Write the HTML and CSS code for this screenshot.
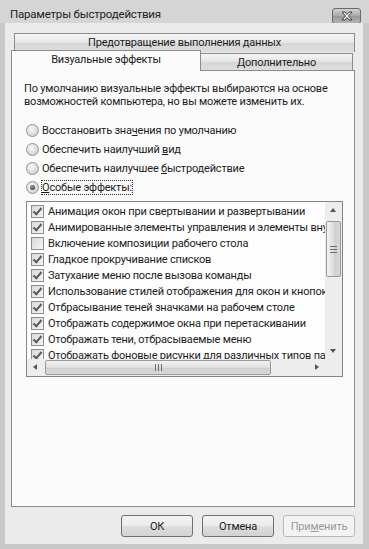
FILE: index.html
```html
<!DOCTYPE html>
<html>
<head>
    <title>Параметры быстродействия</title>
    <meta name="viewport" content="width=device-width, initial-scale=1.0">
    <link rel="stylesheet" href="styles.css">
</head>
<body>
    <div class="window">
        <div class="titlebar">
            <span class="title">Параметры быстродействия</span>
            <div class="close">
                <svg width="14" height="10" viewBox="0 0 14 10">
                    <path d="M2 1 L5 1 L7 3.5 L9 1 L12 1 L8.5 5 L12 9 L9 9 L7 6.5 L5 9 L2 9 L5.5 5 Z" fill="#fafafa" stroke="#3c3c3c" stroke-width="1"/>
                </svg>
            </div>
        </div>

        <div class="client">
            <!-- вкладки -->
            <div class="tabs">
                <div class="tab-row back">
                    <div class="tab wide">Предотвращение выполнения данных</div>
                </div>
                <div class="tab-row front">
                    <div class="tab active">Визуальные эффекты</div>
                    <div class="tab other">Дополнительно</div>
                </div>
            </div>

            <div class="panel">
                <p class="intro">По умолчанию визуальные эффекты выбираются на основе возможностей компьютера, но вы можете изменить их.</p>

                <div class="radios">
                    <div class="radio-row"><span class="radio"></span><span>Восстановить зна<u>ч</u>ения по умолчанию</span></div>
                    <div class="radio-row"><span class="radio"></span><span>Обеспечить наилучший <u>в</u>ид</span></div>
                    <div class="radio-row"><span class="radio"></span><span>Обеспечить наилучшее <u>б</u>ыстродействие</span></div>
                    <div class="radio-row"><span class="radio on"></span><span class="focus"><u>О</u>собые эффекты:</span></div>
                </div>

                <div class="listbox">
                    <div class="list-body">
                        <div class="list-items">
                            <div class="item"><span class="cb on"></span>Анимация окон при свертывании и развертывании</div>
                            <div class="item"><span class="cb on"></span>Анимированные элементы управления и элементы внутри окна</div>
                            <div class="item"><span class="cb"></span>Включение композиции рабочего стола</div>
                            <div class="item"><span class="cb on"></span>Гладкое прокручивание списков</div>
                            <div class="item"><span class="cb on"></span>Затухание меню после вызова команды</div>
                            <div class="item"><span class="cb on"></span>Использование стилей отображения для окон и кнопок</div>
                            <div class="item"><span class="cb on"></span>Отбрасывание теней значками на рабочем столе</div>
                            <div class="item"><span class="cb on"></span>Отображать содержимое окна при перетаскивании</div>
                            <div class="item"><span class="cb on"></span>Отображать тени, отбрасываемые меню</div>
                            <div class="item"><span class="cb on"></span>Отображать фоновые рисунки для различных типов папок</div>
                        </div>
                        <div class="vscroll">
                            <div class="arrow up"></div>
                            <div class="vtrack">
                                <div class="vthumb"><span class="grip-h"></span></div>
                            </div>
                            <div class="arrow down"></div>
                        </div>
                    </div>
                    <div class="hscroll-row">
                        <div class="hscroll">
                            <div class="arrow left"></div>
                            <div class="htrack">
                                <div class="hthumb"><span class="grip-v"></span></div>
                            </div>
                            <div class="arrow right"></div>
                        </div>
                        <div class="corner"></div>
                    </div>
                </div>
            </div>

            <div class="buttons">
                <button class="btn">ОК</button>
                <button class="btn">Отмена</button>
                <button class="btn disabled">При<u>м</u>енить</button>
            </div>
        </div>
    </div>
</body>
</html>
```

FILE: styles.css
```css
body {
    margin: 0;
    padding: 0;
    font-family: Roboto, "Noto Sans", sans-serif;
    font-size: 11px;
    letter-spacing: -0.2px;
    color: #1c1c1c;
}

.window {
    width: 369px;
    height: 549px;
    background: #c8c8c8;
    display: flex;
    flex-direction: column;
}

.titlebar {
    height: 23px;
    background: #d5d5d5;
    display: flex;
    align-items: flex-start;
    justify-content: space-between;
}

.title {
    padding: 7px 0 0 10px;
    font-size: 11.5px;
    color: #222;
}

.close {
    width: 27px;
    height: 14px;
    margin: 8px 8px 0 0;
    border: 1px solid #6a6a6a;
    border-radius: 3px;
    background: linear-gradient(#d2d2d2, #a9a9a9 50%, #989898 51%, #b4b4b4);
    display: flex;
    align-items: center;
    justify-content: center;
}

.client {
    flex: 1;
    margin: 0 6px 5px 5px;
    background: #ebebeb;
    display: flex;
    flex-direction: column;
}

/* вкладки */
.tabs {
    padding: 10px 0 0 6px;
}

.tab-row {
    display: flex;
    align-items: flex-start;
}

.tab {
    box-sizing: border-box;
    border: 1px solid #8c8c8c;
    border-bottom: none;
    background: linear-gradient(#f6f6f6, #e4e4e4 50%, #d6d6d6 51%, #dedede);
    text-align: center;
    line-height: 17px;
}

.tab.wide {
    margin-left: 3px;
    width: 341px;
    height: 19px;
}

.tab-row.front {
    margin-top: -2px;
}

.tab.active {
    position: relative;
    z-index: 1;
    width: 190px;
    height: 21px;
    background: #fbfbfb;
    line-height: 17px;
}

.tab.other {
    width: 152px;
    height: 17px;
    margin-top: 3px;
    border-left: none;
    line-height: 18px;
}

.panel {
    box-sizing: border-box;
    margin: -1px 0 0 6px;
    width: 344px;
    height: 437px;
    border: 1px solid #8c8c8c;
    background: #fbfbfb;
    padding: 11px 0 0 12px;
}

.intro {
    margin: 0;
    line-height: 13px;
    width: 320px;
}

.radios {
    margin-top: 13px;
}

.radio-row {
    height: 19px;
    display: flex;
    align-items: center;
    margin-left: 2px;
}

.radio {
    box-sizing: border-box;
    width: 13px;
    height: 13px;
    border-radius: 50%;
    border: 1px solid #939393;
    background: radial-gradient(circle at 40% 35%, #fafafa, #d4d4d4 70%, #c2c2c2);
    margin-right: 3px;
    display: flex;
    align-items: center;
    justify-content: center;
}

.radio.on::after {
    content: "";
    width: 5px;
    height: 5px;
    border-radius: 50%;
    background: radial-gradient(circle at 40% 35%, #9a9a9a, #2a2a2a);
}

.focus {
    outline: 1px dotted #333;
    outline-offset: 0;
    line-height: 13px;
}

/* список */
.listbox {
    box-sizing: border-box;
    margin: 4px 0 0 2px;
    width: 317px;
    height: 176px;
    border: 1px solid #848484;
    background: #fdfdfd;
    display: flex;
    flex-direction: column;
}

.list-body {
    height: 157px;
    display: flex;
}

.list-items {
    flex: 1;
    overflow: hidden;
    padding-top: 1px;
}

.item {
    height: 16px;
    display: flex;
    align-items: center;
    white-space: nowrap;
    padding-left: 4px;
}

.cb {
    flex: none;
    box-sizing: border-box;
    width: 13px;
    height: 13px;
    border: 1px solid #8e8e8e;
    background: linear-gradient(135deg, #d9d9d9, #f6f6f6);
    margin-right: 4px;
    position: relative;
}

.cb.on::after {
    content: "";
    position: absolute;
    left: 3px;
    top: 0px;
    width: 3px;
    height: 7px;
    border-right: 2px solid #5c5c5c;
    border-bottom: 2px solid #5c5c5c;
    transform: rotate(40deg);
}

.vscroll {
    width: 17px;
    background: #ededed;
    display: flex;
    flex-direction: column;
}

.arrow {
    flex: none;
    width: 17px;
    height: 17px;
    position: relative;
}

.arrow::after {
    content: "";
    position: absolute;
    width: 0;
    height: 0;
}

.arrow.up::after {
    left: 5px;
    top: 6px;
    border-left: 3.5px solid transparent;
    border-right: 3.5px solid transparent;
    border-bottom: 4px solid #555;
}

.arrow.down::after {
    left: 5px;
    top: 7px;
    border-left: 3.5px solid transparent;
    border-right: 3.5px solid transparent;
    border-top: 4px solid #555;
}

.arrow.left::after {
    left: 6px;
    top: 5px;
    border-top: 3.5px solid transparent;
    border-bottom: 3.5px solid transparent;
    border-right: 4px solid #555;
}

.arrow.right::after {
    left: 7px;
    top: 5px;
    border-top: 3.5px solid transparent;
    border-bottom: 3.5px solid transparent;
    border-left: 4px solid #555;
}

.vtrack {
    flex: 1;
    padding: 2px 1px 0 1px;
}

.vthumb {
    box-sizing: border-box;
    height: 56px;
    border: 1px solid #9a9a9a;
    border-radius: 2px;
    background: linear-gradient(90deg, #f3f3f3, #dedede 50%, #cfcfcf 51%, #d8d8d8);
    display: flex;
    align-items: center;
    justify-content: center;
}

.grip-h {
    width: 7px;
    height: 7px;
    background: repeating-linear-gradient(#6e6e6e 0 1px, transparent 1px 3px);
}

.hscroll-row {
    height: 17px;
    display: flex;
}

.hscroll {
    flex: 1;
    display: flex;
    background: #ededed;
}

.htrack {
    flex: 1;
    padding: 1px 0 0 1px;
}

.hthumb {
    box-sizing: border-box;
    width: 226px;
    height: 15px;
    border: 1px solid #9a9a9a;
    border-radius: 2px;
    background: linear-gradient(#f3f3f3, #dedede 50%, #cfcfcf 51%, #d8d8d8);
    display: flex;
    align-items: center;
    justify-content: center;
}

.grip-v {
    width: 7px;
    height: 7px;
    background: repeating-linear-gradient(90deg, #6e6e6e 0 1px, transparent 1px 3px);
}

.corner {
    width: 17px;
    background: #ededed;
}

/* кнопки */
.buttons {
    display: flex;
    justify-content: flex-end;
    gap: 9px;
    padding: 8px 8px 0 0;
}

.btn {
    box-sizing: border-box;
    width: 72px;
    height: 22px;
    border: 1px solid #707070;
    border-radius: 3px;
    background: linear-gradient(#f4f4f4, #ebebeb 50%, #dddddd 51%, #d2d2d2);
    font-family: inherit;
    font-size: 11px;
    letter-spacing: -0.2px;
    color: #1c1c1c;
    padding: 0;
}

.btn.disabled {
    border-color: #b8b8b8;
    background: #f3f3f3;
    color: #9a9a9a;
}
```
